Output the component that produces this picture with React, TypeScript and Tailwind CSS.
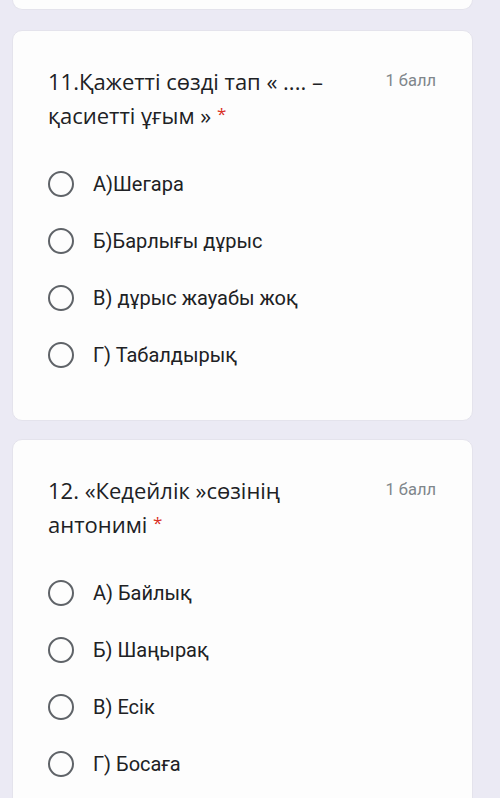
const questions = [
  {
    title: ['11.Қажетті сөзді тап « .... –', 'қасиетті ұғым »'],
    options: ['А)Шегара', 'Б)Барлығы дұрыс', 'В) дұрыс жауабы жоқ', 'Г) Табалдырық'],
  },
  {
    title: ['12. «Кедейлік »сөзінің', 'антонимі'],
    options: ['А) Байлық', 'Б) Шаңырақ', 'В) Есік', 'Г) Босаға'],
  },
];

const Radio = () => (
  <span className="block h-[26px] w-[26px] shrink-0 rounded-full border-[2.5px] border-[#5f6368]" />
);

const QuestionCard = ({ title, options }: { title: string[]; options: string[] }) => (
  <div className="rounded-[10px] border border-[#e4e3ec] bg-[#fdfdfd] pl-[35px] pr-[36px] pt-[33px] pb-[37px]">
    <div className="flex items-start justify-between">
      <div className="font-['Open_Sans',sans-serif] text-[22px] leading-[34px] text-[#202124]">
        <div className="h-[34px] whitespace-nowrap">{title[0]}</div>
        <div className="h-[34px] whitespace-nowrap">
          {title[1]} <span className="relative -top-[4px] text-[17px] leading-none text-[#d93025]">*</span>
        </div>
      </div>
      <div className="shrink-0 font-['Roboto',sans-serif] text-[16.5px] leading-[34px] text-[#80868b]">
        1 балл
      </div>
    </div>
    <div className="mt-[23px] flex flex-col">
      {options.map((o) => (
        <div key={o} className="flex h-[57px] items-center gap-[19px]">
          <Radio />
          <span className="font-['Roboto',sans-serif] text-[20px] leading-none text-[#202124]">{o}</span>
        </div>
      ))}
    </div>
  </div>
);

export default function App() {
  return (
    <div className="h-[798px] overflow-hidden bg-[#ebeaf4] pl-[12px] pr-[27px]">
      <div className="h-[10px] rounded-b-[10px] border border-t-0 border-[#e4e3ec] bg-[#fdfdfd]" />
      <div className="mt-[20px] flex flex-col gap-[18px]">
        {questions.map((q, i) => (
          <QuestionCard key={i} title={q.title} options={q.options} />
        ))}
      </div>
    </div>
  );
}
